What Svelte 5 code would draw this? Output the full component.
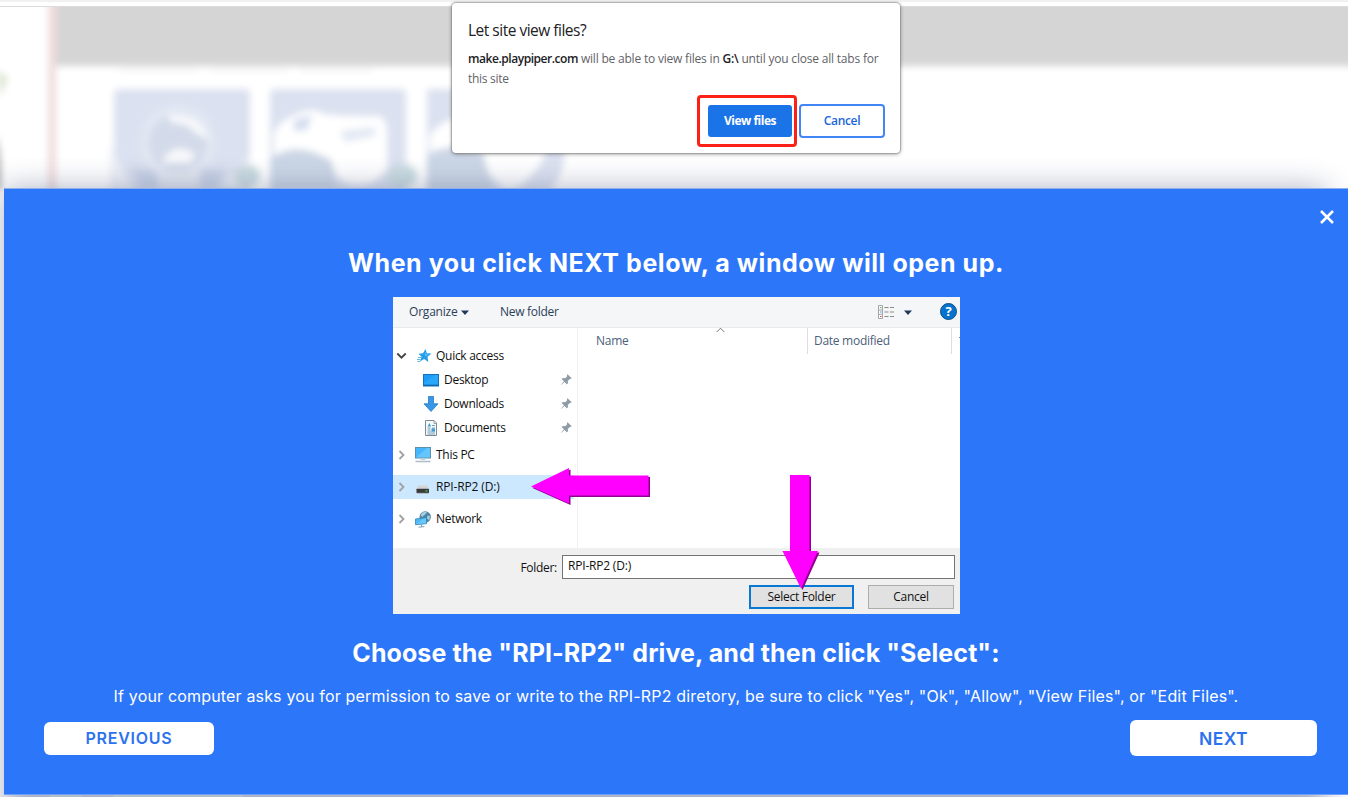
<script>
  const quick = [
    { name: 'Desktop', icon: 'desktop' },
    { name: 'Downloads', icon: 'down' },
    { name: 'Documents', icon: 'doc' }
  ];
  const roots = [
    { name: 'This PC', icon: 'pc', cls: 'pc' },
    { name: 'RPI-RP2 (D:)', icon: 'drive', cls: 'drive' },
    { name: 'Network', icon: 'net', cls: 'net' }
  ];
</script>

{#snippet icon(kind)}
  {#if kind === 'desktop'}
    <svg width="16" height="16" viewBox="0 0 16 16"><rect x=".5" y="2.5" width="15" height="11.5" fill="#1d9bf5" stroke="#1272bd" /><path d="M1 11 12 3h3v10H1z" fill="#35aeff" opacity=".55" /><path d="M1 13.2h14" stroke="#0b5c9d" /></svg>
  {:else if kind === 'down'}
    <svg width="16" height="16" viewBox="0 0 16 16"><path d="M5.500.5h5v7.300h4.500L8 15.500 1 7.800h4.500z" fill="#3997e8" stroke="#2678c4" stroke-width=".8" /></svg>
  {:else if kind === 'doc'}
    <svg width="16" height="16" viewBox="0 0 16 16"><path d="M2.500.5h8.500l2.500 2.500v12.500h-11z" fill="#f7f8f8" stroke="#82898e" /><path d="M11 .5v3h2.500" fill="#ddd" stroke="#82898e" stroke-width=".7" /><path d="M4.500 6.500 6.500 3 8 6.500z" fill="#3b9bd8" /><path d="M4.500 8h3m1.500-2.500h3M9 8h3m-7.500 2h3m-3 2h7.500m-7.500 2h7.500" stroke="#6f9ebd" /><rect x="8.500" y="8.500" width="3.500" height="3" fill="#439dd2" /></svg>
  {:else if kind === 'pc'}
    <svg width="17" height="16" viewBox="0 0 17 16"><rect x=".5" y=".5" width="15" height="10.500" fill="#45b6fb" stroke="#5c8fae" /><path d="M1 10.500 12 1h3v9.500z" fill="#7bd0ff" opacity=".6" /><path d="M5.500 11.500h5V13h-5z" fill="#c2d2dd" /><path d="M.500 14.500h15" stroke="#aebfcc" stroke-width="1.600" /></svg>
  {:else if kind === 'drive'}
    <svg width="17" height="16" viewBox="0 0 17 16"><path d="m3.500 6.500 8.500 0 2 3.200H1.500z" fill="#d4d4d4" /><rect x="1.500" y="9.700" width="12.500" height="4.300" rx=".5" fill="#3a3a3a" /><path d="M2 14.200h11.500" stroke="#929292" stroke-width=".7" /><path d="M10.500 12h2" stroke="#31d249" stroke-width="1.300" /></svg>
  {:else}
    <svg width="17" height="17" viewBox="0 0 17 17"><circle cx="10.200" cy="6" r="5.700" fill="#4b84a4" /><path d="M7.500 1.500q3-1.500 4.500 0L9.500 4 7 6 5.500 4zm5 3 2.500.5-.5 4-2.500-1z" fill="#a9cedb" /><path d="M.500 8 11.500 6.500v6.200L.5 13.700z" fill="#4cb9f6" stroke="#2f83b6" stroke-width=".8" /><path d="M1 13 9 7.500l2-.3v5.200z" fill="#7fd1fb" opacity=".6" /><path d="M6.500 13.500v2m-3 .700 6-.6" stroke="#7c9db3" /></svg>
  {/if}
{/snippet}

{#snippet chevron()}
  <svg class="chev" width="8" height="12" viewBox="0 0 8 12"><path d="m1.500 2 4 4-4 4" fill="none" stroke="#a2a2a2" stroke-width="1.800" /></svg>
{/snippet}

<div class="page">
  <svg class="backdrop" width="1348" height="797" viewBox="0 0 1348 797" aria-hidden="true">
    <defs>
      <filter id="soft" x="-20%" y="-20%" width="140%" height="140%"><feGaussianBlur stdDeviation="3.600" /></filter>
      <filter id="shade" x="-10%" y="-20%" width="120%" height="140%"><feGaussianBlur stdDeviation="15" /></filter>
      <clipPath id="below"><rect y="7" width="1348" height="790" /></clipPath>
    </defs>
    <rect width="1348" height="797" fill="#fff" />
    <g clip-path="url(#below)">
      <g filter="url(#soft)">
        <rect x="56" y="-20" width="1320" height="86" fill="#d5d5d5" />
        <rect x="48" y="-20" width="8" height="240" fill="#f2dddd" />
        <path d="M120 70h252" stroke="#f4f4f4" stroke-width="4" stroke-dasharray="78 12" />
        <rect x="114" y="89" width="136" height="120" rx="5" fill="#dbe1f0" />
        <circle cx="178" cy="142" r="38" fill="#e2e7f3" />
        <circle cx="178" cy="143" r="29" fill="#d3dae9" />
        <path d="M168 115q34-3 40 25l-12-7-10-8-16-3z" fill="#f8f9fc" />
        <path d="M162 163q5-14 20-15l14 6-6 9z" fill="#f7f8fb" />
        <path d="m110 145 24 48h-24z" fill="#edf0f6" />
        <path d="m250 155-30 34h31z" fill="#edf0f6" />
        <path d="M130 168l12 20h20l-8-18zm72 0-6 20h20l10-18z" fill="#c8d2e5" />
        <path d="M158 172h42v20h-42z" fill="#e2e6f0" />
        <ellipse cx="247" cy="176" rx="13" ry="11" fill="#cbdce1" />
        <rect x="270" y="89" width="136" height="120" rx="5" fill="#dbe1f0" />
        <path d="M274 132q8-12 21-17 18-9 28-1 20 3 56 2 9 4 8 20v32q-11 18-32 17-18-3-22-18l-59-10z" fill="#fff" />
        <path d="M294 120l18-5-5 15-13 1z" fill="#d4ddef" />
        <path d="m340 131 35-4v9l-30 6z" fill="#e2e8f3" />
        <path d="M271 158q26-19 61 3l3 28h-64z" fill="#cbd6e5" />
        <ellipse cx="402" cy="176" rx="15" ry="12" fill="#cadce1" />
        <path d="M427 89h125q10 0 10 15v40q8 25-15 50H427z" fill="#dbe1f0" />
        <path d="M430 135q10-13 26-17 65-8 86 0 7 30 0 43-18 28-36 30l-20-21-56-20z" fill="#fff" />
        <path d="M427 156q20-16 56-3l10 38h-66z" fill="#cbd6e5" />
        <path d="M-2 70 8 78-1 98z" fill="#dce5d0" />
        <path d="M-5 135q7 15 6 55h-6z" fill="#aaa" />
      </g>
      <rect x="4" y="188" width="1322" height="640" fill="#4b5880" opacity=".45" filter="url(#shade)" />
    </g>
    <rect width="1348" height="2" fill="#f1f1f1" />
    <path d="M0 6.500h1348" stroke="#d9dcda" />
    <path d="M50 796h32m31 0h130" stroke="#b2bfc6" stroke-width="2" />
  </svg>

  <main class="modal">
    <button class="close" aria-label="Close"><svg width="16" height="16" viewBox="0 0 16 16"><path d="m2 2 12 12m0-12L2 14" stroke="#fff" stroke-width="2.600" /></svg></button>
    <h1><span class="h-one">When you click NEXT below, a window will open up.</span></h1>

    <section class="explorer">
      <div class="toolbar">
        <span class="organize">Organize</span>
        <svg class="caret" width="8" height="5" viewBox="0 0 8 5"><path d="M0 .5h8L4 5z" fill="#1e395b" /></svg>
        <span class="newf">New folder</span>
        <svg class="view" width="17" height="14" viewBox="0 0 17 14"><path d="M.5.5h4v13h-4zM.5 5h4m-4 4.300h4" fill="#fff" stroke="#a4a4a4" /><path d="M6.500 2.500h4m1.500 0h4m-9.500 4.500h4m1.500 0h4m-9.500 4.500h4m1.500 0h4" stroke="#8a8a8a" /><path d="M2 2.700h1.500" stroke="#48a36c" /><path d="M2 7h1.500" stroke="#4583d2" /><path d="M2 11.500h1.500" stroke="#d34b4b" /></svg>
        <svg class="caret two" width="8" height="5" viewBox="0 0 8 5"><path d="M0 .5h8L4 5z" fill="#1e395b" /></svg>
        <span class="help">?</span>
      </div>
      <div class="body">
        <nav>
          <div class="row top">
            <svg class="chev open" width="11" height="8" viewBox="0 0 11 8"><path d="m1.300 1.500 4.200 4.200 4.200-4.200" fill="none" stroke="#444" stroke-width="1.800" /></svg>
            <svg class="star" width="15" height="14" viewBox="0 0 15 14"><path d="m8.500 0 1.300 4.300 4.700.2-4 3.200.8 5.300-4.200-3L3 12.500l1.500-4.800L1.500 4.800l4.500-.5z" fill="#259de8" /><path d="m8 2 .7 3.200 3.300.2-4 1.600z" fill="#67c6ff" /><path d="M1 8.500h3M0 10.500h3.500m-3 2h2.500" stroke="#62b5e5" /></svg>
            <span class="qa">Quick access</span>
          </div>
          {#each quick as item}
            <div class="row child">
              {@render icon(item.icon)}
              <span class="name">{item.name}</span>
              <svg class="pin" width="11" height="11" viewBox="0 0 11 11"><path d="m6.500.3 4.200 4-1.200.8-.7-.2-2 2 .2 2.300-1.200 1L3.600 8 .5 10.700.2 10.400 3 7.300.8 5.200l1-1.200 2.400.3 2-2-.3-1z" fill="#8e9ca5" /></svg>
            </div>
          {/each}
          {#each roots as item}
            <div class="row root {item.cls}">
              {@render chevron()}
              {@render icon(item.icon)}
              <span class="name">{item.name}</span>
            </div>
          {/each}
        </nav>
        <div class="files">
          <div class="col c-name">Name<svg class="sort" width="9" height="6" viewBox="0 0 9 6"><path d="m.7 5 3.800-3.800L8.300 5" fill="none" stroke="#777" /></svg></div>
          <div class="col c-date">Date modified</div>
          <div class="col c-last"><i></i></div>
        </div>
      </div>
      <footer>
        <div class="folder"><label for="folder"><span>Folder:</span></label><div id="folder" class="input"><span>RPI-RP2 (D:)</span></div></div>
        <div class="actions"><button class="select">Select Folder</button><button class="dismiss">Cancel</button></div>
      </footer>
      <svg class="arrows" width="567" height="317" viewBox="393 297 567 317" aria-hidden="true">
        <g fill="#8f008f" transform="translate(1.500 1.500)"><path d="M531 486.500 569 468v7.500h79.500v20H569v8z" /><path d="M790 475h19.500v76h8.500l-17 37.500-18.500-37.500h7.500z" /></g>
        <g fill="#f0f"><path d="M531 486.500 569 468v7.500h79.500v20H569v8z" /><path d="M790 475h19.500v76h8.500l-17 37.500-18.500-37.500h7.500z" /></g>
      </svg>
    </section>

    <h2><span class="h-two">Choose the "RPI-RP2" drive, and then click "Select":</span></h2>
    <p class="hint"><span>If your computer asks you for permission to save or write to the RPI-RP2 diretory, be sure to click "Yes", "Ok", "Allow", "View Files", or "Edit Files".</span></p>
    <div class="nav-buttons"><button class="prev">PREVIOUS</button><button class="next">NEXT</button></div>
  </main>

  <aside class="prompt">
    <h3><span>Let site view files?</span></h3>
    <p><span class="l1"><b class="host">make.playpiper.com</b> will be able to view files in <b>G:\</b> until you close all tabs for</span><br /><span class="l2">this site</span></p>
    <div class="choices"><div class="ring"><button class="allow">View files</button></div><button class="deny">Cancel</button></div>
  </aside>
</div>

<style>
  :global(body) { margin: 0; }
  .page { position: relative; width: 1348px; height: 797px; overflow: hidden; background: #fff; }
  .page * { box-sizing: border-box; }
  svg { display: block; flex: none; }
  button { font: inherit; padding: 0; border: 0; white-space: nowrap; }
  h1, h2, h3, p { margin: 0; font-weight: inherit; white-space: nowrap; }
  .backdrop { position: absolute; inset: 0; }

  .modal { position: absolute; left: 4px; top: 188px; width: 1344px; height: 607px; background: #2c76fa; border-top: 1px solid #8eb0ea; border-bottom: 1px solid #6f9ffa; color: #fff; font-family: Inter, sans-serif; display: flex; flex-direction: column; align-items: center; }
  .close { position: absolute; right: 13px; top: 20px; background: none; }
  h1, h2 { font-weight: 700; font-size: 25px; line-height: 30px; }
  h1 { margin-top: 59px; }
  h2 { margin-top: 24px; }
  .h-one { letter-spacing: .55px; }
  .h-two { letter-spacing: .08px; }
  .hint { margin-top: 17px; font-size: 16px; line-height: 22px; }
  .hint span { letter-spacing: .17px; }
  .nav-buttons { width: 1273px; height: 36px; margin: 13px 0 0 40px; display: flex; justify-content: space-between; align-items: center; align-self: flex-start; }
  .prev, .next { background: #fff; color: #2c71f0; border-radius: 6px; font-weight: 600; }
  .prev { width: 170px; height: 33px; font-size: 16px; letter-spacing: .75px; }
  .next { width: 187px; height: 36px; font-size: 17.500px; letter-spacing: .4px; }

  .explorer { position: relative; width: 567px; height: 317px; margin: 19px 0 0 1px; background: #fff; color: #111; font: 12px/16px "Open Sans", sans-serif; letter-spacing: -.28px; overflow: hidden; white-space: nowrap; }
  .toolbar { height: 31px; background: #f5f6f7; border-bottom: 1px solid #e8eaec; display: flex; align-items: center; padding-left: 16px; color: #2b4059; }
  .organize { width: 52px; letter-spacing: -.2px; }
  .newf { margin-left: 31px; width: 320px; flex: none; }
  .view { margin-left: 58px; }
  .caret.two { margin-left: 9px; }
  .help { margin: 0 0 2px 28px; flex: none; width: 17px; height: 17px; border-radius: 50%; background: #0873cc; border: 1px solid #07518e; color: #fff; font: 700 13px/15px "Open Sans", sans-serif; text-align: center; }
  .body { display: flex; height: 220px; }
  nav { width: 185px; flex: none; padding-top: 16px; border-right: 1px solid #f0f0f0; }
  .row { display: flex; align-items: center; height: 24px; }
  .row.top { padding-left: 3px; }
  .star { margin: 0 4px 0 10px; }
  .child { padding-left: 30px; }
  .child .name { margin-left: 5px; }
  .pin { margin: 0 5px 1px auto; }
  .root { padding-left: 5px; }
  .root .chev { margin-right: 9px; }
  .root .name { margin-left: 4px; }
  .root.pc { margin-top: 3px; }
  .root.drive { margin: 8px 3px 0 0; background: #cce8ff; letter-spacing: -.15px; }
  .root.net { margin-top: 8px; }
  .files { display: flex; height: 26px; width: 382px; color: #4c607a; }
  .col { position: relative; padding-top: 5px; border-right: 1px solid #dedede; }
  .c-name { width: 230px; padding-left: 18px; }
  .c-date { width: 144px; padding-left: 6px; }
  .c-last { width: 8px; border: 0; padding: 9px 0 0 7px; }
  .c-last i { display: block; height: 1px; background: #6d7e92; }
  .sort { position: absolute; left: 138px; top: -1px; }
  footer { height: 66px; background: #f0f0f0; padding: 7px 5px 0; }
  .folder { display: flex; justify-content: flex-end; align-items: center; height: 24px; }
  .folder label { padding-top: 1px; }
  .input { width: 393px; height: 24px; border: 1px solid #747474; background: #fff; margin-left: 5px; padding: 2px 5px; letter-spacing: -.2px; }
  .actions { display: flex; justify-content: flex-end; gap: 14px; margin: 6px 1px 0 0; }
  .actions button { height: 24px; background: #e1e1e1; border: 1px solid #adadad; color: #111; letter-spacing: inherit; }
  .actions .select { width: 105px; border: 2px solid #0878d4; }
  .actions .dismiss { width: 86px; }
  .arrows { position: absolute; left: 0; top: 0; }

  .prompt { position: absolute; left: 452px; top: 3px; width: 448px; height: 150px; background: #fff; border-radius: 4px; box-shadow: 0 0 1px 1px #8b8b8b99, 0 1px 4px #0006; padding: 16px 15px 0 16px; font-family: "Open Sans", sans-serif; color: #5f6368; }
  h3 { font-size: 15.500px; line-height: 22px; color: #202124; }
  h3 span { letter-spacing: -.5px; }
  .prompt p { font-size: 12px; line-height: 20px; margin-top: 8px; }
  .l1 { letter-spacing: -.2px; }
  .l2 { letter-spacing: -.3px; }
  .prompt b { color: #202124; font-weight: 600; }
  .prompt .host { letter-spacing: -.45px; }
  .choices { display: flex; align-items: center; justify-content: flex-end; gap: 2px; margin-top: 6px; }
  .ring { width: 100px; height: 52px; border: 3px solid #fc2116; border-radius: 4px; padding: 7px 2px 7px 8px; }
  .allow, .deny { padding-bottom: 1px; }
  .allow { width: 84px; height: 32px; border-radius: 3px; background: #1b73e8; color: #fff; font: 700 12px "Open Sans", sans-serif; letter-spacing: -.5px; }
  .deny { width: 86px; height: 34px; border-radius: 4px; border: 2px solid #4285f4; background: #fff; color: #1b65dc; font: 600 12px "Open Sans", sans-serif; letter-spacing: -.35px; }
</style>
